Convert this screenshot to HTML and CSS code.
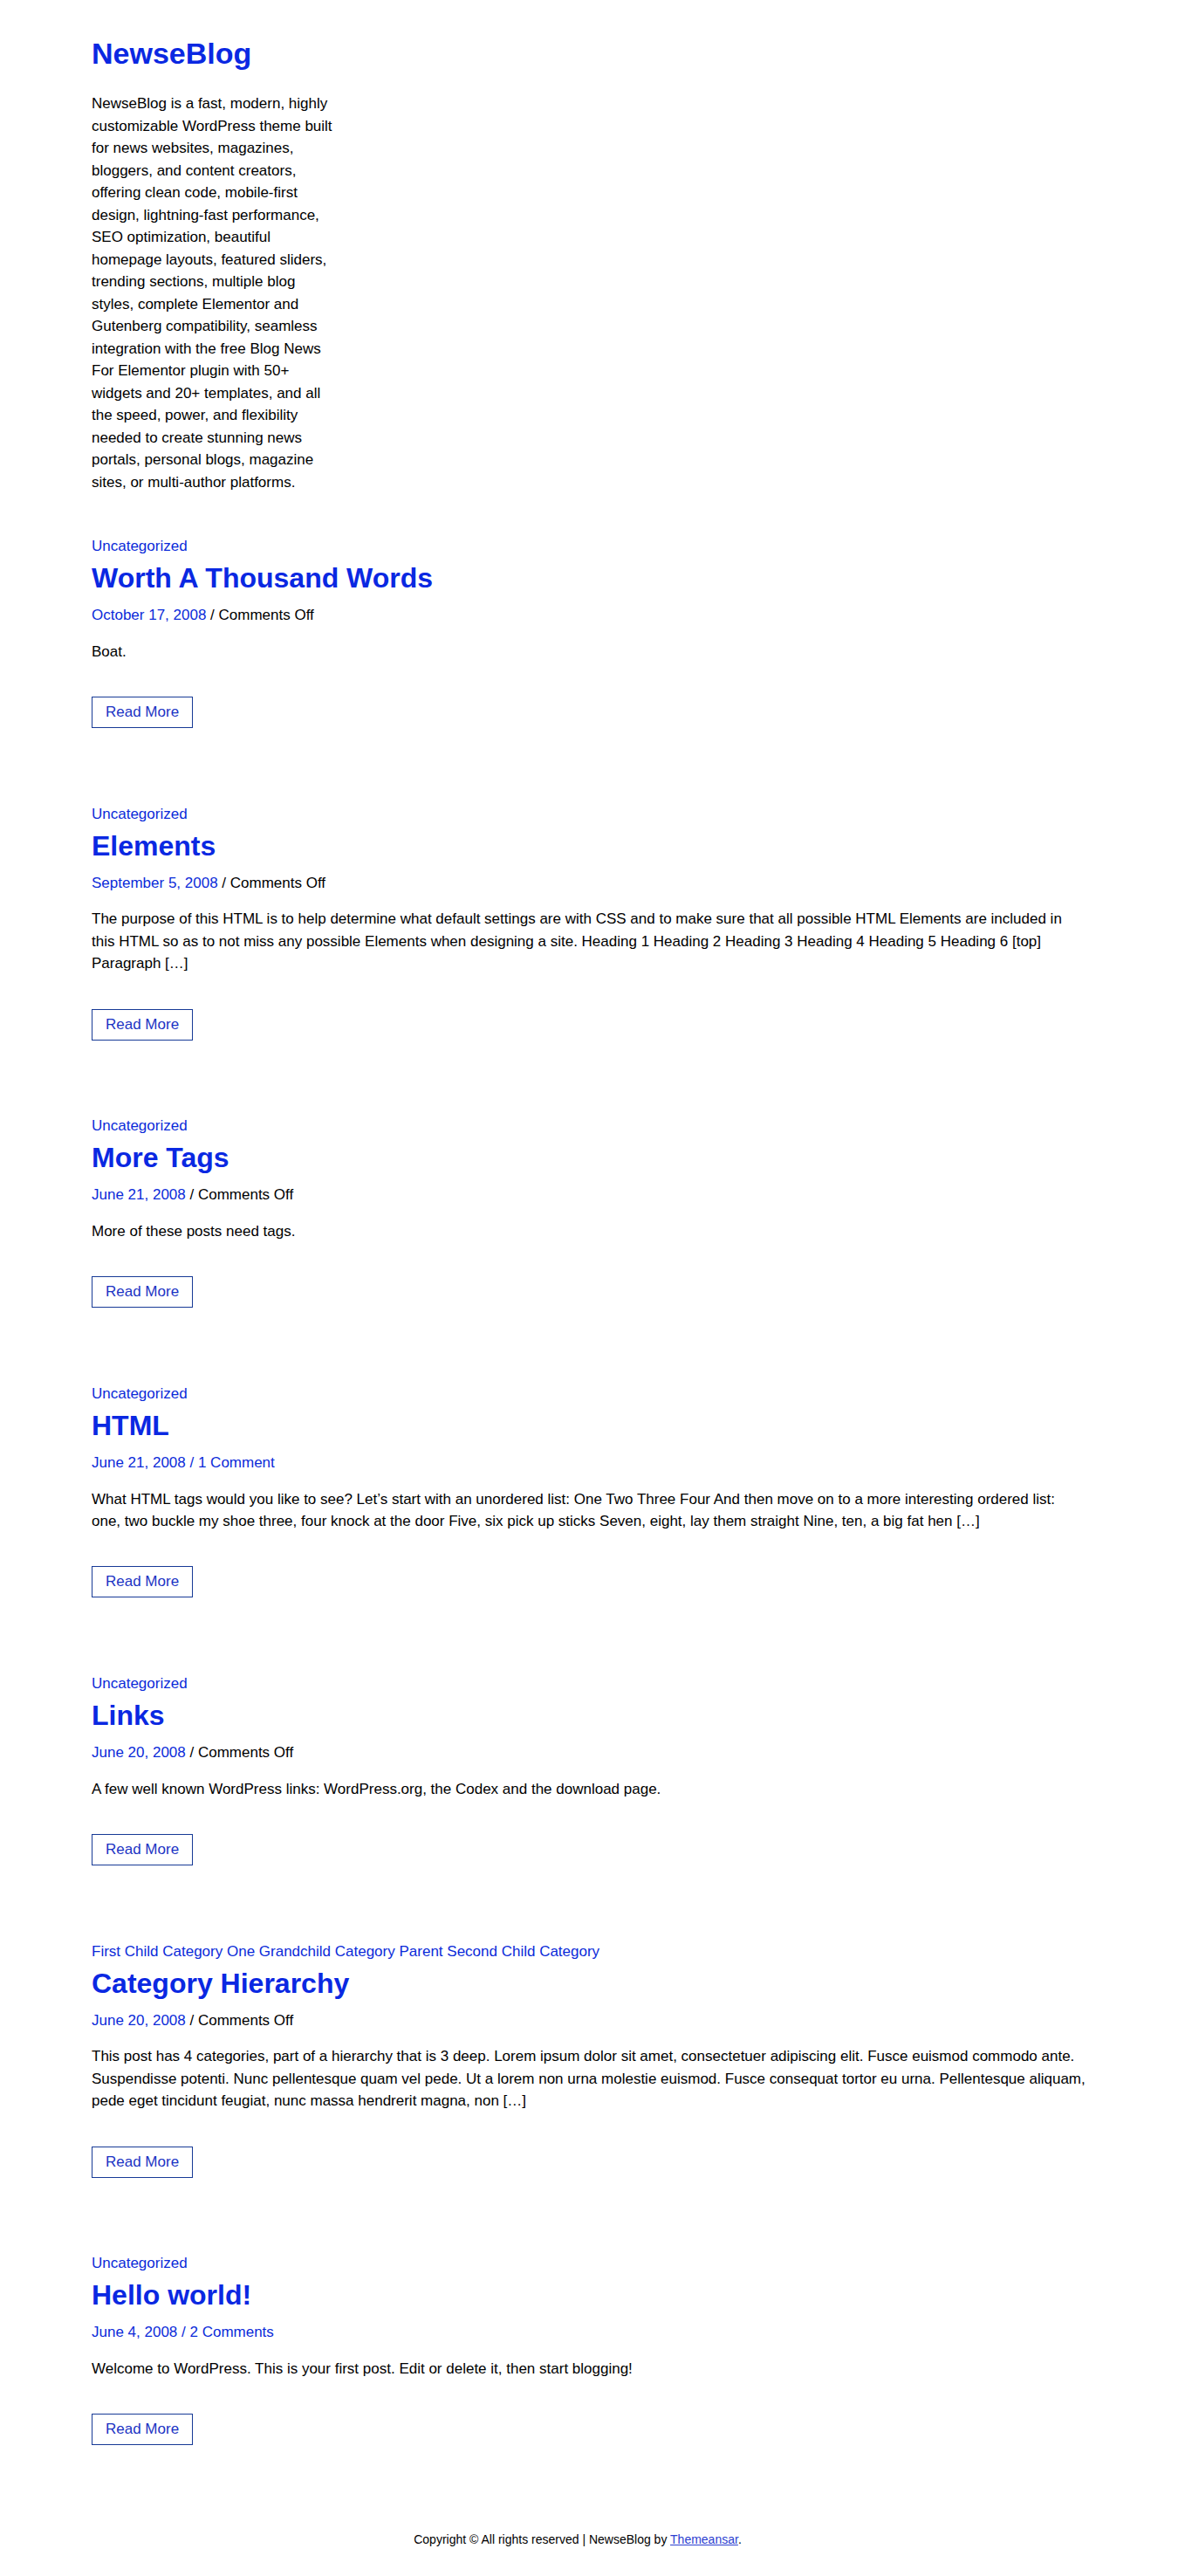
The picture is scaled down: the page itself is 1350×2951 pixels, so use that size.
FILE: index.html
```html
<!DOCTYPE html>
<html lang="en">
<head>
<meta charset="utf-8">
<title>NewseBlog</title>
<link rel="stylesheet" href="styles.css">
</head>
<body>
<div class="site">
  <header class="site-header">
    <h1 class="site-title"><a href="#">NewseBlog</a></h1>
    <p class="site-desc">NewseBlog is a fast, modern, highly customizable WordPress theme built for news websites, magazines, bloggers, and content creators, offering clean code, mobile-first design, lightning-fast performance, SEO optimization, beautiful homepage layouts, featured sliders, trending sections, multiple blog styles, complete Elementor and Gutenberg compatibility, seamless integration with the free Blog News For Elementor plugin with 50+ widgets and 20+ templates, and all the speed, power, and flexibility needed to create stunning news portals, personal blogs, magazine sites, or multi-author platforms.</p>
  </header>

  <main class="posts">
    <article class="post">
      <div class="cats"><a href="#">Uncategorized</a></div>
      <h2 class="post-title"><a href="#">Worth A Thousand Words</a></h2>
      <div class="meta"><a href="#">October 17, 2008</a> / Comments Off</div>
      <div class="excerpt"><p>Boat.</p></div>
      <a class="read-more" href="#">Read More</a>
    </article>

    <article class="post">
      <div class="cats"><a href="#">Uncategorized</a></div>
      <h2 class="post-title"><a href="#">Elements</a></h2>
      <div class="meta"><a href="#">September 5, 2008</a> / Comments Off</div>
      <div class="excerpt"><p>The purpose of this HTML is to help determine what default settings are with CSS and to make sure that all possible HTML Elements are included in this HTML so as to not miss any possible Elements when designing a site. Heading 1 Heading 2 Heading 3 Heading 4 Heading 5 Heading 6 [top] Paragraph […]</p></div>
      <a class="read-more" href="#">Read More</a>
    </article>

    <article class="post">
      <div class="cats"><a href="#">Uncategorized</a></div>
      <h2 class="post-title"><a href="#">More Tags</a></h2>
      <div class="meta"><a href="#">June 21, 2008</a> / Comments Off</div>
      <div class="excerpt"><p>More of these posts need tags.</p></div>
      <a class="read-more" href="#">Read More</a>
    </article>

    <article class="post">
      <div class="cats"><a href="#">Uncategorized</a></div>
      <h2 class="post-title"><a href="#">HTML</a></h2>
      <div class="meta"><a href="#">June 21, 2008</a><a href="#"> / 1 Comment</a></div>
      <div class="excerpt"><p>What HTML tags would you like to see? Let’s start with an unordered list: One Two Three Four And then move on to a more interesting ordered list: one, two buckle my shoe three, four knock at the door Five, six pick up sticks Seven, eight, lay them straight Nine, ten, a big fat hen […]</p></div>
      <a class="read-more" href="#">Read More</a>
    </article>

    <article class="post">
      <div class="cats"><a href="#">Uncategorized</a></div>
      <h2 class="post-title"><a href="#">Links</a></h2>
      <div class="meta"><a href="#">June 20, 2008</a> / Comments Off</div>
      <div class="excerpt"><p>A few well known WordPress links: WordPress.org, the Codex and the download page.</p></div>
      <a class="read-more" href="#">Read More</a>
    </article>

    <article class="post">
      <div class="cats"><a href="#">First Child Category</a> <a href="#">One Grandchild Category</a> <a href="#">Parent</a> <a href="#">Second Child Category</a></div>
      <h2 class="post-title"><a href="#">Category Hierarchy</a></h2>
      <div class="meta"><a href="#">June 20, 2008</a> / Comments Off</div>
      <div class="excerpt"><p>This post has 4 categories, part of a hierarchy that is 3 deep. Lorem ipsum dolor sit amet, consectetuer adipiscing elit. Fusce euismod commodo ante. Suspendisse potenti. Nunc pellentesque quam vel pede. Ut a lorem non urna molestie euismod. Fusce consequat tortor eu urna. Pellentesque aliquam, pede eget tincidunt feugiat, nunc massa hendrerit magna, non […]</p></div>
      <a class="read-more" href="#">Read More</a>
    </article>

    <article class="post">
      <div class="cats"><a href="#">Uncategorized</a></div>
      <h2 class="post-title"><a href="#">Hello world!</a></h2>
      <div class="meta"><a href="#">June 4, 2008</a><a href="#"> / 2 Comments</a></div>
      <div class="excerpt"><p>Welcome to WordPress. This is your first post. Edit or delete it, then start blogging!</p></div>
      <a class="read-more" href="#">Read More</a>
    </article>
  </main>

  <footer class="site-footer">
    <p>Copyright © All rights reserved | NewseBlog by <a href="#">Themeansar</a>.</p>
  </footer>
</div>
</body>
</html>
```

FILE: styles.css
```css
html, body {
  margin: 0;
  padding: 0;
  background: #ffffff;
}

body {
  font-family: "Liberation Sans", Arial, Helvetica, sans-serif;
  font-size: 17px;
  color: #000000;
}

a {
  color: #0b2bd9;
  text-decoration: none;
}

.site {
  width: 1140px;
  margin: 0 auto;
}

.site-header {
  padding-top: 41px;
}

.site-title {
  margin: 0;
  font-size: 34px;
  line-height: 40.8px;
  font-weight: 700;
}

.site-title a {
  color: #0a28e2;
}

.site-desc {
  margin: 24.5px 0 0;
  width: 282px;
  line-height: 25.5px;
}

.posts {
  margin-top: 48px;
}

.post {
  display: flex;
  flex-direction: column;
  align-items: flex-start;
  margin-bottom: 85.8px;
}

.post:last-child {
  margin-bottom: 0;
}

.cats {
  line-height: 25.5px;
}

.post-title {
  margin: 4.5px 0 0;
  font-size: 32px;
  line-height: 38.4px;
  font-weight: 700;
}

.post-title a {
  color: #0a28e2;
}

.meta {
  margin-top: 10.6px;
  line-height: 25.5px;
}

.excerpt {
  margin-top: 16px;
  line-height: 25.5px;
}

.excerpt p {
  margin: 0;
}

.read-more {
  margin-top: 38.8px;
  padding: 4px 15px;
  line-height: 26px;
  border: 1px solid #173a96;
  color: #1c34c4;
}

.site-footer {
  margin-top: 97.6px;
  padding-bottom: 29px;
  text-align: center;
  font-size: 14px;
  line-height: 21px;
}

.site-footer p {
  margin: 0;
  padding-right: 26px;
}

.site-footer a {
  color: #2c40d0;
  text-decoration: underline;
}
```
